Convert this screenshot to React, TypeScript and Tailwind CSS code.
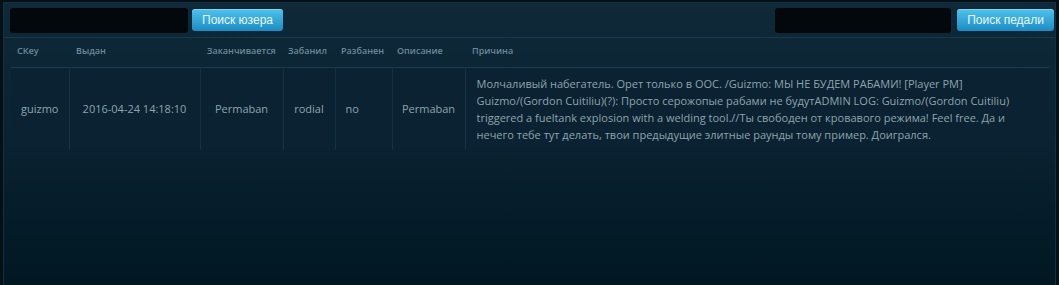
export default function App() {
    return (
        <div className="h-[285px] w-[1059px] overflow-hidden bg-[#050f16] p-[2px_3px_0_3px]">
            <div className="h-full border border-b-0 border-[#123040] bg-gradient-to-b from-[#0f2939] via-[#0a2231] to-[#011823]">
                <div className="flex h-[35px] items-center justify-between border-b border-[#16394b] pl-[6px] pr-[1px]">
                    <div className="flex items-center gap-[4px]">
                        <input className="h-[25px] w-[178px] rounded-[3px] bg-[#02080b] outline-none" />
                        <button className="h-[22px] rounded-[3px] bg-gradient-to-b from-[#4cc3ec] to-[#1a8cc4] px-[10px] font-['Liberation_Sans',sans-serif] text-[12px] text-[#eaf6fb] shadow-[inset_0_1px_0_rgba(255,255,255,0.3)]">
                            Поиск юзера
                        </button>
                    </div>
                    <div className="flex items-center gap-[6px]">
                        <input className="h-[25px] w-[176px] rounded-[3px] bg-[#02080b] outline-none" />
                        <button className="h-[22px] rounded-[3px] bg-gradient-to-b from-[#4cc3ec] to-[#1a8cc4] px-[10px] font-['Liberation_Sans',sans-serif] text-[12px] text-[#eaf6fb] shadow-[inset_0_1px_0_rgba(255,255,255,0.3)]">
                            Поиск педали
                        </button>
                    </div>
                </div>

                <table className="ml-[7px] w-[1038px] table-fixed border-collapse font-['Open_Sans',sans-serif]">
                    <colgroup>
                        <col className="w-[58px]" />
                        <col className="w-[131px]" />
                        <col className="w-[83px]" />
                        <col className="w-[52px]" />
                        <col className="w-[57px]" />
                        <col className="w-[73px]" />
                        <col />
                    </colgroup>
                    <thead>
                        <tr className="h-[29px] text-left text-[9px] font-semibold text-[#6b8898]">
                            <th className="pb-[4px] pl-[6px] font-semibold">CKey</th>
                            <th className="pb-[4px] pl-[7px] font-semibold">Выдан</th>
                            <th className="pb-[4px] pl-[7px] font-semibold">Заканчивается</th>
                            <th className="pb-[4px] pl-[5px] font-semibold">Забанил</th>
                            <th className="pb-[4px] pl-[6px] font-semibold">Разбанен</th>
                            <th className="pb-[4px] pl-[5px] font-semibold">Описание</th>
                            <th className="pb-[4px] pl-[7px] font-semibold">Причина</th>
                        </tr>
                    </thead>
                    <tbody>
                        <tr className="h-[83px] border-t border-[#1b3a4b] bg-[#0a2231] text-[11px] text-[#8ea4ae]">
                            <td className="border-r border-[#163242] text-center">guizmo</td>
                            <td className="border-r border-[#163242] text-center">2016-04-24 14:18:10</td>
                            <td className="border-r border-[#163242] text-center">Permaban</td>
                            <td className="border-r border-[#163242] text-center">rodial</td>
                            <td className="border-r border-[#163242] pl-[10px] text-left">no</td>
                            <td className="border-r border-[#163242] text-center">Permaban</td>
                            <td className="py-[7px] pl-[11px] pr-[20px] align-top leading-[17px]">
                                Молчаливый набегатель. Орет только в ООС. /Guizmo: МЫ НЕ БУДЕМ РАБАМИ! [Player PM] Guizmo/(Gordon Cuitiliu)(?): Просто серожопые рабами не будутADMIN LOG: Guizmo/(Gordon Cuitiliu) triggered a fueltank explosion with a welding tool.//Ты свободен от кровавого режима! Feel free. Да и нечего тебе тут делать, твои предыдущие элитные раунды тому пример. Доигрался.
                            </td>
                        </tr>
                    </tbody>
                </table>
            </div>
        </div>
    )
}
